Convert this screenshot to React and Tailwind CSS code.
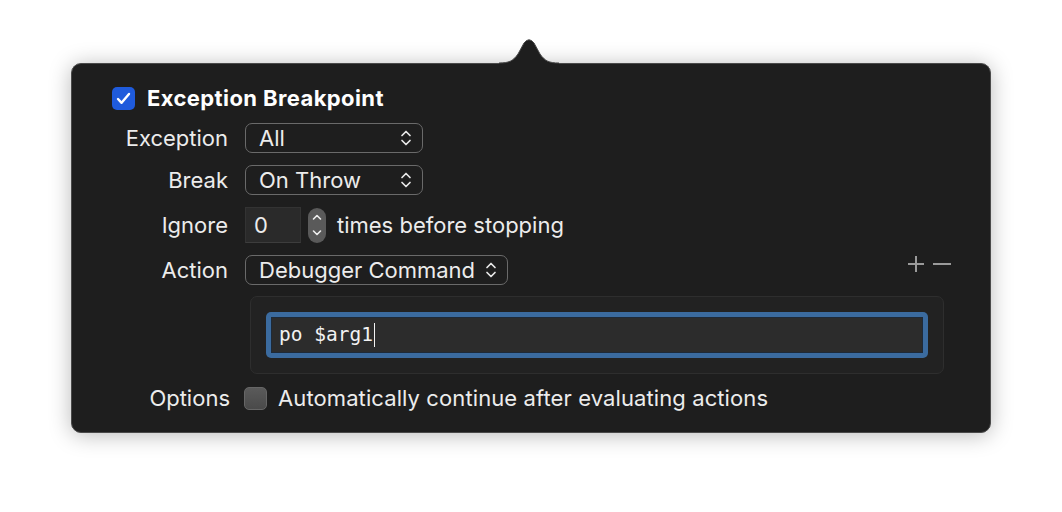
import React from "react";

const font = { fontFamily: "Inter, 'Liberation Sans', sans-serif" };

function Chevrons({ className = "" }) {
  return (
    <svg width="12" height="18" viewBox="0 0 12 18" className={className} fill="none" stroke="#e8e8e8" strokeWidth="1.7" strokeLinecap="round" strokeLinejoin="round">
      <path d="M2 6.5 L6 2.5 L10 6.5" />
      <path d="M2 11.5 L6 15.5 L10 11.5" />
    </svg>
  );
}

function Popup({ label, width }) {
  return (
    <div className={`flex h-[30px] items-center justify-between rounded-[7px] border border-[#6a6a6a] pl-[13px] pr-[10px] ${width}`}>
      <span className="text-[22px] leading-none text-[#ececec]">{label}</span>
      <Chevrons />
    </div>
  );
}

function Label({ children }) {
  return (
    <div className="w-[156px] shrink-0 pr-0 text-right text-[22px] leading-none text-[#ececec]">{children}</div>
  );
}

export default function App() {
  return (
    <div className="h-[512px] w-[1062px] overflow-hidden bg-white" style={font}>
      <div className="relative ml-[71px] mt-[63px] h-[370px] w-[920px] rounded-[10px] border border-[#4a4a4a] bg-[#1e1e1e] shadow-[0_2px_22px_rgba(0,0,0,0.28)]">
        <svg className="absolute left-[427px] top-[-26px]" width="60" height="28" viewBox="0 0 60 28">
          <path d="M0,25 C10,25 14,23 19,16 L25,5 Q30,-1.5 35,5 L41,16 C46,23 50,25 60,25 L60,28 L0,28 Z" fill="#1e1e1e" />
          <path d="M0,25 C10,25 14,23 19,16 L25,5 Q30,-1.5 35,5 L41,16 C46,23 50,25 60,25" fill="none" stroke="#4a4a4a" strokeWidth="1" />
        </svg>

        {/* Title row */}
        <div className="ml-[40px] mt-[23px] flex h-[22px] items-center gap-[12px]">
          <div className="flex h-[23px] w-[23px] items-center justify-center rounded-[5px] bg-[#1f5bdc]">
            <svg width="15" height="13" viewBox="0 0 15 13" fill="none" stroke="white" strokeWidth="2.4" strokeLinecap="round" strokeLinejoin="round">
              <path d="M2 7 L5.6 10.8 L13 2" />
            </svg>
          </div>
          <span className="text-[22px] font-bold leading-none tracking-[0.4px] text-white">Exception Breakpoint</span>
        </div>

        {/* Exception */}
        <div className="mt-[14px] flex h-[30px] items-center">
          <Label>Exception</Label>
          <div className="ml-[17px]">
            <Popup label="All" width="w-[178px]" />
          </div>
        </div>

        {/* Break */}
        <div className="mt-[12px] flex h-[30px] items-center">
          <Label>Break</Label>
          <div className="ml-[17px]">
            <Popup label="On Throw" width="w-[178px]" />
          </div>
        </div>

        {/* Ignore */}
        <div className="mt-[12px] flex h-[36px] items-center">
          <Label>Ignore</Label>
          <div className="ml-[17px] flex h-[36px] w-[56px] items-center border border-[#333] border-b-[#3d3d3d] bg-[#2a2a2a] pl-[8px] text-[22px] leading-none text-[#ececec]">
            0
          </div>
          <div className="ml-[7px] flex h-[35px] w-[18px] items-center justify-center rounded-full bg-[#5a5a5a]">
            <svg width="12" height="28" viewBox="0 0 12 28" fill="none" stroke="#eeeeee" strokeWidth="1.6" strokeLinecap="round" strokeLinejoin="round">
              <path d="M2.5 8 L6 4.5 L9.5 8" />
              <path d="M2.5 20 L6 23.5 L9.5 20" />
            </svg>
          </div>
          <span className="ml-[11px] text-[22px] leading-none text-[#ececec]">times before stopping</span>
        </div>

        {/* Action */}
        <div className="mt-[11px] flex h-[31px] items-center">
          <Label>Action</Label>
          <div className="ml-[17px]">
            <Popup label="Debugger Command" width="w-[263px]" />
          </div>
          <div className="ml-auto mr-[39px] flex items-center gap-[8px] self-start pt-[1px]">
            <svg width="18" height="18" viewBox="0 0 18 18" stroke="#9a9a9a" strokeWidth="2">
              <path d="M9 1 V17 M1 9 H17" />
            </svg>
            <svg width="18" height="18" viewBox="0 0 18 18" stroke="#9a9a9a" strokeWidth="2">
              <path d="M0 9 H18" />
            </svg>
          </div>
        </div>

        {/* Command container */}
        <div className="ml-[178px] mt-[11px] flex h-[78px] w-[694px] items-center rounded-[7px] border border-[#2e2e2e] bg-[#222222] px-[15px]">
          <div className="flex h-[46px] w-full items-center rounded-[5px] bg-[#3b6b9f] p-[5px]">
            <div className="flex h-full w-full items-center border border-[#1e2a38] bg-[#2c2c2c] pl-[7px]">
              <span className="text-[19.5px] leading-none text-[#f2f2f2]" style={{ fontFamily: "'DejaVu Sans Mono', 'Liberation Mono', monospace" }}>
                po $arg1
              </span>
              <span className="ml-[1px] h-[24px] w-[1.5px] bg-[#f2f2f2]" />
            </div>
          </div>
        </div>

        {/* Options */}
        <div className="mt-[12px] flex h-[24px] items-center">
          <div className="w-[158px] shrink-0 text-right text-[22px] leading-none text-[#ececec]">Options</div>
          <div className="ml-[14px] h-[23px] w-[23px] rounded-[5px] border border-[#666] bg-gradient-to-b from-[#5a5a5a] to-[#4a4a4a]" />
          <span className="ml-[11px] text-[22px] leading-none tracking-[0.1px] text-[#ececec]">Automatically continue after evaluating actions</span>
        </div>
      </div>
    </div>
  );
}
